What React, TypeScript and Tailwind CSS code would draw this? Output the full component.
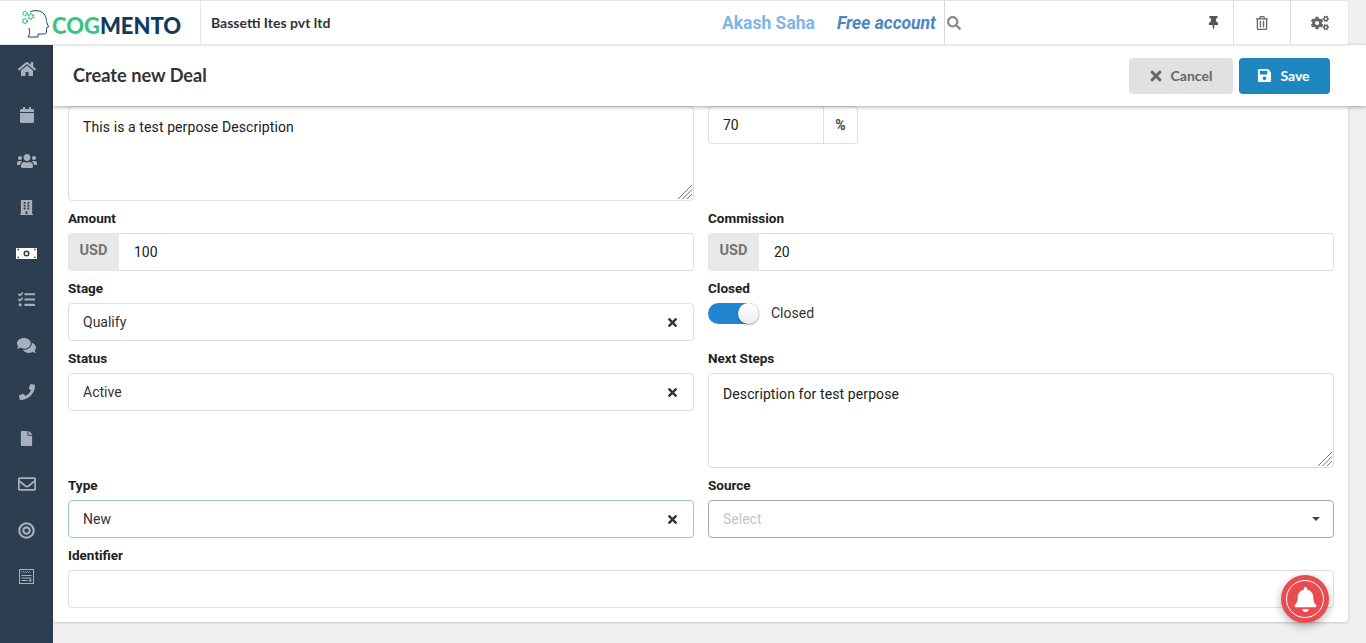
import { ReactNode } from 'react';
import {
  FaHome, FaCalendar, FaUsers, FaBuilding, FaTasks, FaComments, FaPhone, FaFile,
  FaRegEnvelope, FaBullseye, FaThumbtack, FaRegTrashAlt, FaCogs, FaSearch, FaTimes, FaSave, FaBell,
} from 'react-icons/fa';

function MoneyIcon() {
  return (
    <svg width="21" height="11" viewBox="0 0 21 11">
      <rect width="21" height="11" fill="#fff" />
      <circle cx="10.500" cy="5.500" r="2.300" fill="none" stroke="#2d3e50" strokeWidth="1.400" />
      <path d="M1.500 1.500h1.500M18 1.500h1.500M1.500 9.500h1.500M18 9.500h1.500" stroke="#2d3e50" strokeWidth="1.500" />
    </svg>
  );
}

function ContentIcon() {
  return (
    <svg width="15" height="15" viewBox="0 0 15 15" fill="none" stroke="#a8b1bb">
      <rect x=".5" y=".5" width="14" height="14" strokeWidth="1" />
      <path d="M2.500 2.500l1 1 1-1 1 1 1-1 1 1 1-1 1 1 1-1 1 1" strokeWidth=".9" />
      <path d="M2.500 6.500h10M2.500 9h10M2.500 11.500h6" strokeWidth="1" />
      <path d="M10 11.500h2.500" strokeWidth="2" />
    </svg>
  );
}

const navItems = [
  { icon: <FaHome size={18} /> },
  { icon: <FaCalendar size={16} /> },
  { icon: <FaUsers size={20} /> },
  { icon: <FaBuilding size={15} /> },
  { icon: <MoneyIcon /> },
  { icon: <FaTasks size={17} /> },
  { icon: <FaComments size={19} /> },
  { icon: <FaPhone size={16} /> },
  { icon: <FaFile size={15} /> },
  { icon: <FaRegEnvelope size={18} /> },
  { icon: <FaBullseye size={17} /> },
  { icon: <ContentIcon /> },
];

function Logo() {
  return (
    <div className="flex items-center pl-[21px] w-[200px] shrink-0">
      <svg width="30" height="28" viewBox="0 0 30 28" className="shrink-0 mr-[1px] mt-[3px]" fill="none">
        <path d="M9 2C12 0 20 0 23 4 26 8 25 11 26 13L27.500 17 25.500 18V22C25.500 24 24 24 21 24H17V27H7C9 24 9 21 8 18" stroke="#1d4766" strokeWidth="1" />
        <circle cx="4" cy="3.500" r="2" stroke="#3ec47d" strokeWidth="1.500" strokeDasharray="1.400 .6" />
        <circle cx="10" cy="6.500" r="2.500" stroke="#3ec47d" strokeWidth="2" strokeDasharray="1.800 .8" />
        <circle cx="4" cy="11" r="2.200" stroke="#3ec47d" strokeWidth="1.800" strokeDasharray="1.500 .7" />
      </svg>
      <span className="text-[22px] leading-none font-black font-['Lato',sans-serif] mt-[7px]">
        <span className="text-[#3cc380]">COG</span>
        <span className="text-[#123a5c]">MENTO</span>
      </span>
    </div>
  );
}

function Field({ label, children }: { label?: string; children: ReactNode }) {
  return (
    <div className="flex flex-col">
      {label && <label className="text-[13.500px] leading-[15px] font-bold text-[#212121] mb-[7px] mt-[10px]">{label}</label>}
      {children}
    </div>
  );
}

function TextArea({ value }: { value: string }) {
  return (
    <div className="relative h-[95px] border border-[#dededf] rounded-[4px] px-[14px] pt-[12px] text-[14px] leading-[17px] tracking-[0.1px] text-[#212121] bg-white">
      {value}
      <svg width="16" height="16" viewBox="0 0 16 16" className="absolute right-0 bottom-0" stroke="#777" strokeWidth="1">
        <path d="M1 15 15 1M5.500 15 15 5.500M10 15l5-5" />
      </svg>
    </div>
  );
}

function UsdInput({ value }: { value: string }) {
  return (
    <div className="flex h-[38px] rounded-[4px] border border-[#dededf] bg-white text-[14px]">
      <div className="w-[51px] -m-[1px] mr-0 bg-[#e8e8e8] rounded-l-[4px] flex items-center justify-center text-[14.500px] font-bold text-[#757575] pb-[3px]">USD</div>
      <div className="flex items-center pl-[15px] pt-[1px] text-[#212121]">{value}</div>
    </div>
  );
}

function SelectBox({ value, focused }: { value: string; focused?: boolean }) {
  return (
    <div className={`flex h-[38px] items-center justify-between rounded-[4px] border bg-white pl-[14px] pr-[14px] text-[14px] text-[#333] ${focused ? 'border-[#96c8da]' : 'border-[#dededf]'}`}>
      {value}
      <FaTimes size={13} className="text-[#333]" />
    </div>
  );
}

export default function App() {
  return (
    <div className="h-[643px] w-[1366px] overflow-hidden bg-[#f0f0f0] font-['Roboto',sans-serif] flex flex-col relative">
      <header className="relative z-30 h-[45px] w-[1348px] shrink-0 flex bg-white border-t border-[#e4e4e4] border-b shadow-[0_1px_2px_rgba(0,0,0,0.1)]">
        <Logo />
        <div className="flex w-[744px] shrink-0 items-center border-l border-[#e6e6e6] pl-[10px] text-[14px] font-bold font-['Lato',sans-serif] text-[#333]">
          Bassetti Ites pvt ltd
        </div>
        <div className="absolute left-[722px] top-[12px] flex items-baseline text-[17.500px] leading-[20px] font-bold">
          <span className="text-[#7cb6e8]">Akash Saha</span>
          <span className="ml-[22px] italic text-[#4a86c5]">Free account</span>
        </div>
        <div className="flex flex-1 items-center border-l border-[#d8d8d8]">
          <FaSearch size={14} className="ml-[2px] text-[#8a8a8a]" />
          <FaThumbtack size={13} className="ml-auto mr-[13px] text-[#555]" />
          <div className="flex h-full w-[57px] items-center justify-center border-l border-[#dcdcdc]">
            <FaRegTrashAlt size={14} className="text-[#666]" />
          </div>
          <div className="flex h-full w-[58px] items-center justify-center border-l border-[#dcdcdc]">
            <FaCogs size={18} className="text-[#666]" />
          </div>
        </div>
      </header>

      <div className="flex flex-1 min-h-0">
        <nav className="w-[53px] shrink-0 bg-[#2d3e50] flex flex-col items-center pt-[0.500px] text-[#a8b1bb]">
          {navItems.map((item, i) => (
            <div key={i} className="flex h-[46.200px] w-full shrink-0 items-center justify-center">
              {item.icon}
            </div>
          ))}
        </nav>

        <main className="flex-1 min-w-0 flex flex-col">
          <div className="relative z-20 h-[61px] shrink-0 flex items-center justify-between bg-white pl-[20px] pr-[36px] shadow-[0_1px_4px_rgba(0,0,0,0.35)]">
            <h1 className="text-[18.200px] font-bold font-['Lato',sans-serif] text-[#333]">Create new Deal</h1>
            <div className="flex gap-[6px]">
              <button className="flex h-[36px] w-[104px] items-center justify-center gap-[7px] rounded-[4px] bg-[#e0e1e2] pr-[2px] text-[14px] font-bold font-['Lato',sans-serif] text-[#666]">
                <FaTimes size={16} />Cancel
              </button>
              <button className="flex h-[36px] w-[91px] items-center justify-center gap-[8px] rounded-[4px] bg-[#1e87bf] pr-[2px] text-[14px] font-bold font-['Lato',sans-serif] text-white">
                <FaSave size={15} />Save
              </button>
            </div>
          </div>

          <div className="h-[516px] w-[1295px] shrink-0 bg-white rounded-b-[4px] shadow-[0_1px_3px_rgba(0,0,0,0.18)] px-[15px] grid grid-cols-[626px_626px] gap-x-[14px] content-start">
            <TextArea value="This is a test perpose Description" />
            <div className="flex h-[38px] w-[150px] rounded-[4px] border border-[#dededf] text-[14px] text-[#212121]">
              <div className="flex w-[114px] items-center pl-[14px]">70</div>
              <div className="flex flex-1 items-center justify-center border-l border-[#dededf] text-[14px] font-bold text-[#444]">%</div>
            </div>

            <Field label="Amount"><UsdInput value="100" /></Field>
            <Field label="Commission"><UsdInput value="20" /></Field>

            <Field label="Stage"><SelectBox value="Qualify" /></Field>
            <Field label="Closed">
              <div className="flex items-center h-[21px]">
                <div className="relative h-[21px] w-[51px] rounded-full bg-[#2185d0]">
                  <div className="absolute right-0 top-0 h-[21px] w-[21px] rounded-full bg-gradient-to-b from-white to-[#eeeeee] shadow-[0_1px_2px_rgba(0,0,0,0.35)]" />
                </div>
                <span className="ml-[12px] text-[14px] text-[#333]">Closed</span>
              </div>
            </Field>

            <Field label="Status"><SelectBox value="Active" /></Field>
            <Field label="Next Steps"><TextArea value="Description for test perpose" /></Field>

            <Field label="Type"><SelectBox value="New" focused /></Field>
            <Field label="Source">
              <div className="flex h-[38px] items-center justify-between rounded-[4px] border border-[#a9a9a9] bg-white pl-[14px] pr-[13px] text-[14px] text-[#c4c4c4]">
                Select
                <span className="h-0 w-0 border-x-[4px] border-t-[4px] border-x-transparent border-t-[#444]" />
              </div>
            </Field>

            <div className="col-span-2">
              <Field label="Identifier">
                <div className="h-[38px] rounded-[4px] border border-[#dededf] bg-white" />
              </Field>
            </div>
          </div>
        </main>
      </div>

      <div className="absolute left-[1281px] top-[575px] z-40 flex h-[48px] w-[48px] items-center justify-center rounded-full bg-[#e84c4f] shadow-[0_3px_8px_rgba(0,0,0,0.3)]">
        <div className="flex h-[38px] w-[38px] items-center justify-center rounded-full border border-white">
          <FaBell size={25} className="text-white" />
        </div>
      </div>
    </div>
  );
}
